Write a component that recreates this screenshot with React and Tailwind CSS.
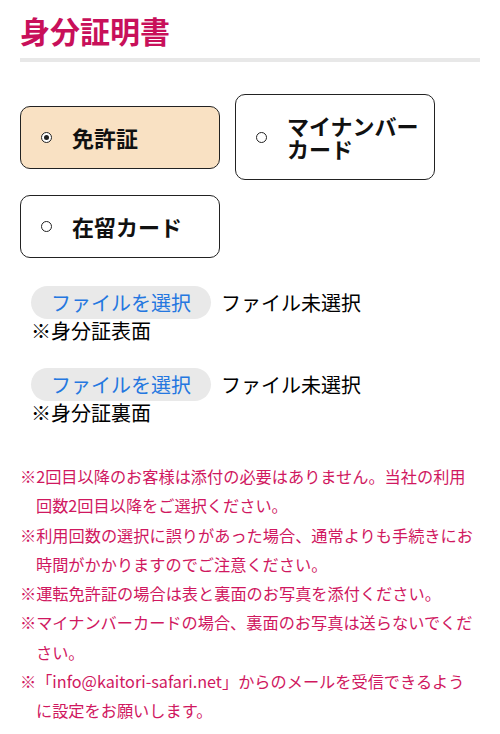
import React, { useState } from 'react';

const jp = "font-['Noto_Sans_CJK_JP','Noto_Sans',sans-serif]";

const options = [
  { id: 'license', label: '免許証' },
  { id: 'mynumber', label: 'マイナンバーカード' },
  { id: 'residence', label: '在留カード' },
];

const notes = [
  '※2回目以降のお客様は添付の必要はありません。当社の利用回数2回目以降をご選択ください。',
  '※利用回数の選択に誤りがあった場合、通常よりも手続きにお時間がかかりますのでご注意ください。',
  '※運転免許証の場合は表と裏面のお写真を添付ください。',
  '※マイナンバーカードの場合、裏面のお写真は送らないでください。',
  '※「info@kaitori-safari.net」からのメールを受信できるように設定をお願いします。',
];

const Radio = ({ checked }) => (
  <span className="w-[11px] h-[11px] shrink-0 rounded-full border-[1.5px] border-[#222] bg-white flex items-center justify-center">
    {checked && <span className="w-[5px] h-[5px] rounded-full bg-[#222]"></span>}
  </span>
);

const FileField = ({ caption }) => (
  <div>
    <div className="flex items-center gap-[10px]">
      <span className="h-[33px] px-[20px] rounded-full bg-[#e9e9e9] text-[#2477e0] text-[20px] leading-[33px]">
        ファイルを選択
      </span>
      <span className="text-[20px] text-black leading-[33px]">ファイル未選択</span>
    </div>
    <p className="text-[20px] leading-[24px] text-black">{caption}</p>
  </div>
);

const App = () => {
  const [selected, setSelected] = useState('license');

  return (
    <div className={`min-h-screen bg-white px-5 pt-2 ${jp}`}>
      {/* Section title */}
      <h2 className="text-[30px] leading-[45px] font-bold text-[#c8105a]">身分証明書</h2>
      <div className="mt-[5px] h-[4px] bg-[#e8e8e8]"></div>

      {/* ID type selector */}
      <div className="mt-[32px] flex flex-wrap items-center gap-[15px]">
        {options.map(opt => {
          const on = selected === opt.id;
          return (
            <button
              key={opt.id}
              type="button"
              onClick={() => setSelected(opt.id)}
              className={`w-[200px] flex items-center gap-[20px] pl-[20px] pr-[12px] py-[19px] border border-[#222] rounded-[10px] text-left ${
                on ? 'bg-[#f9e1c3]' : 'bg-white'
              }`}
            >
              <Radio checked={on} />
              <span className="text-[22px] leading-[23px] font-bold text-[#111]">{opt.label}</span>
            </button>
          );
        })}
      </div>

      {/* Uploads */}
      <div className="mt-[28px] pl-[11px] flex flex-col gap-[25px]">
        <FileField caption="※身分証表面" />
        <FileField caption="※身分証裏面" />
      </div>

      {/* Notes */}
      <ul className="mt-[37px] pb-4 text-[16.2px] leading-[29.3px] text-[#d0185f]">
        {notes.map((n, i) => (
          <li key={i} className="pl-[16px] -indent-[16px]">
            {n}
          </li>
        ))}
      </ul>
    </div>
  );
};

export default App;
